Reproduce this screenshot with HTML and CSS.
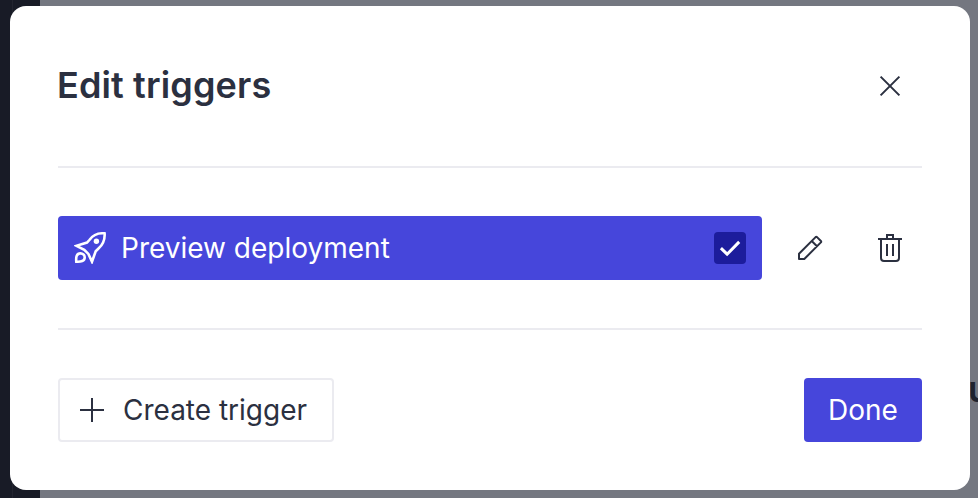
FILE: index.html
```html
<!DOCTYPE html>
<html lang="en">
<head>
<meta charset="utf-8">
<title>Edit triggers</title>
<link rel="stylesheet" href="styles.css">
</head>
<body>
<div class="sidebar"></div>
<span class="page-text">u</span>
<main class="dialog" role="dialog" aria-labelledby="title">
  <header class="header">
    <h1 class="title" id="title">Edit triggers</h1>
    <button class="icon-button" aria-label="Close">
      <svg width="32" height="32" viewBox="0 0 32 32" fill="none" stroke="currentColor" stroke-width="2"><path d="M6.6 6.6 25.4 25.4M25.4 6.6 6.6 25.4"/></svg>
    </button>
  </header>
  <section class="triggers">
    <div class="trigger">
      <svg class="rocket" width="32" height="32" viewBox="0 0 32 32" fill="none" stroke="currentColor" stroke-width="2.6">
        <path d="M30.6 1.4C24.4.8 19.4 2.5 15.6 7.8L13 10.6 2.4 13.8 10.3 17.8 14.4 21.9 18 29.7 21.7 19.2 24.5 16.5C29.8 12 31 7.2 30.6 1.4Z"/>
        <path d="M2.3 29.7C1.8 25 2.6 21.4 6.4 21.4 8.7 21.4 10.7 23.2 10.7 25.4 10.7 29.1 6.8 30 2.3 29.7Z"/>
        <circle cx="22.4" cy="9.2" r="2.7" fill="currentColor" stroke="none"/>
      </svg>
      <span class="trigger-name">Preview deployment</span>
      <span class="checkbox" role="checkbox" aria-checked="true" aria-label="Preview deployment">
        <svg width="32" height="32" viewBox="0 0 32 32" fill="none" stroke="currentColor" stroke-width="3"><path d="M6.9 16.2 13.1 22.2 25.2 9.9"/></svg>
      </span>
    </div>
    <button class="icon-button" aria-label="Edit">
      <svg width="32" height="32" viewBox="0 0 32 32" fill="none" stroke="currentColor" stroke-width="2" stroke-linejoin="round"><path d="M5 27V21.7L21.6 5.1Q22.3 4.5 23 5.1L26.9 9Q27.5 9.7 26.9 10.4L10.3 27ZM17.7 9 23 14.3"/></svg>
    </button>
    <button class="icon-button" aria-label="Delete">
      <svg width="32" height="32" viewBox="0 0 32 32" fill="none" stroke="currentColor" stroke-width="2"><path d="M4 7H28M13 7V3H19V7M7 7V26Q7 29 10 29H22Q25 29 25 26V7M13 12V24M19 12V24"/></svg>
    </button>
  </section>
  <footer class="footer">
    <button class="button button-secondary">
      <svg width="32" height="32" viewBox="0 0 32 32" fill="none" stroke="currentColor" stroke-width="2"><path d="M16 4V28M4 16H28"/></svg>
      <span>Create trigger</span>
    </button>
    <button class="button button-primary">Done</button>
  </footer>
</main>
</body>
</html>
```
FILE: styles.css
```css
* { box-sizing: border-box; }

body {
  margin: 0;
  height: 498px;
  padding: 6px 8px 8px 10px;
  overflow: hidden;
  position: relative;
  background: #747780;
  color: #2b3040;
  font-family: Inter, sans-serif;
  font-size: 28px;
}

.sidebar {
  position: absolute;
  inset: 0 auto 0 0;
  width: 40px;
  background: linear-gradient(90deg, #181b26 12px, #22242f 12px, #22242f 13px, #181b26 13px);
}

.page-text {
  position: absolute;
  left: 968px;
  top: 367px;
  font-size: 36px;
  line-height: 44px;
  font-weight: 600;
  color: #1f232e;
}

.dialog {
  position: relative;
  height: 484px;
  padding: 48px;
  border-radius: 16px;
  background: #fff;
}

.header {
  display: flex;
  align-items: center;
  justify-content: space-between;
  height: 64px;
}

.title {
  margin: 0 0 2px -1px;
  font-size: 36px;
  line-height: 48px;
  font-weight: 600;
  letter-spacing: 0.13px;
}

.triggers {
  display: flex;
  gap: 16px;
  margin: 48px 0;
  padding: 48px 0;
  border: solid #ebebf0;
  border-width: 2px 0;
}

.trigger {
  flex: 1;
  display: flex;
  align-items: center;
  gap: 15px;
  height: 64px;
  padding: 0 16px;
  border-radius: 4px;
  background: #4646db;
  color: #fff;
}

.trigger-name { flex: 1; }

.checkbox {
  width: 32px;
  height: 32px;
  border-radius: 4px;
  background: #1c1c9c;
}

svg { display: block; flex: none; }

button {
  border: 0;
  padding: 0;
  background: none;
  color: inherit;
  font: inherit;
}

.icon-button {
  display: flex;
  align-items: center;
  justify-content: center;
  width: 64px;
  height: 64px;
}

.footer {
  display: flex;
  justify-content: space-between;
}

.button {
  display: flex;
  align-items: center;
  justify-content: center;
  height: 64px;
  border-radius: 4px;
}

.button-secondary {
  gap: 15px;
  width: 276px;
  padding-left: 16px;
  justify-content: flex-start;
  border: 2px solid #ebebf0;
}

.button-primary {
  width: 118px;
  background: #4646db;
  color: #fff;
}
```
